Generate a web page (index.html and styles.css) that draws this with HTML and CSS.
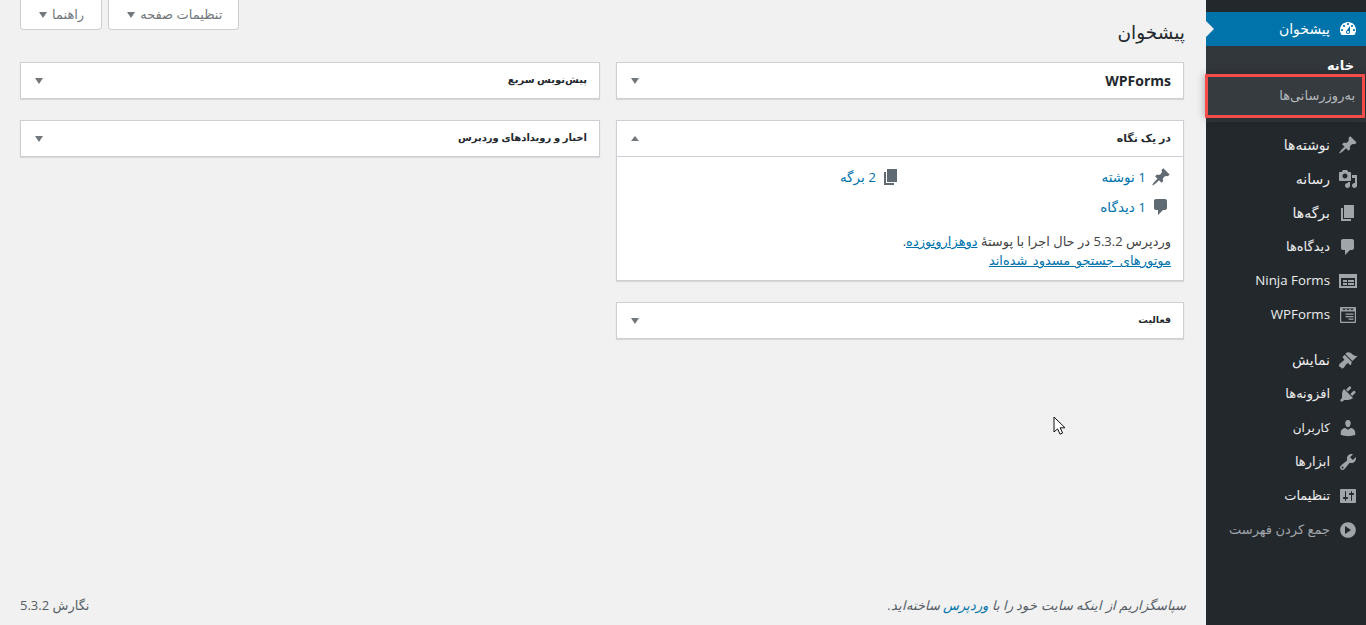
FILE: index.html
```html
<!DOCTYPE html>
<html lang="fa" dir="rtl">
<head>
<meta charset="utf-8">
<title>پیشخوان</title>
<link rel="stylesheet" href="styles.css">
</head>
<body>
<nav class="menu">
  <a class="item current wide" href="#"><svg class="ico" viewBox="0 0 20 20"><path d="M3.76 16h12.48c1.1-1.37 1.76-3.11 1.76-5 0-4.42-3.58-8-8-8s-8 3.58-8 8c0 1.89.66 3.63 1.76 5zM10 4c.55 0 1 .45 1 1s-.45 1-1 1-1-.45-1-1 .45-1 1-1zM6 6c.55 0 1 .45 1 1s-.45 1-1 1-1-.45-1-1 .45-1 1-1zm8 0c.55 0 1 .45 1 1s-.45 1-1 1-1-.45-1-1 .45-1 1-1zm-5.37 5.55L12 7v6c0 1.1-.9 2-2 2s-2-.9-2-2c0-.57.24-1.08.63-1.45zM4 10c.55 0 1 .45 1 1s-.45 1-1 1-1-.45-1-1 .45-1 1-1zm12 0c.55 0 1 .45 1 1s-.45 1-1 1-1-.45-1-1 .45-1 1-1zm-5 3c0-.55-.45-1-1-1s-1 .45-1 1 .45 1 1 1 1-.45 1-1z"/></svg><span>پیشخوان</span></a>
  <div class="sub">
    <a class="sub-home" href="#">خانه</a>
    <a class="sub-update" href="#">به‌روزرسانی‌ها</a>
  </div>
  <a class="item wide" href="#"><svg class="ico" viewBox="0 0 20 20"><path d="M10.44 3.02l1.82-1.82 6.36 6.35-1.83 1.82c-1.05-.68-2.48-.57-3.41.36l-.75.75c-.92.93-1.04 2.35-.35 3.41l-1.83 1.82-2.41-2.41-2.8 2.79c-.42.42-3.38 2.71-3.8 2.29s1.86-3.39 2.28-3.81l2.79-2.79L4.1 9.36l1.83-1.82c1.05.69 2.48.57 3.4-.36l.75-.75c.93-.92 1.05-2.35.36-3.41z"/></svg><span>نوشته‌ها</span></a>
  <a class="item wide" href="#"><svg class="ico" viewBox="0 0 20 20"><path d="M13 11V4c0-.55-.45-1-1-1h-1.67L9 1H5L3.67 3H2c-.55 0-1 .45-1 1v7c0 .55.45 1 1 1h10c.55 0 1-.45 1-1zM7 4.5c1.38 0 2.5 1.12 2.5 2.5S8.38 9.5 7 9.5 4.5 8.38 4.5 7 5.62 4.5 7 4.5zM14 6h5v10.5c0 1.38-1.12 2.5-2.5 2.5S14 17.88 14 16.5s1.12-2.5 2.5-2.5c.17 0 .34.02.5.05V9h-3V6zm-4 8.05V13h2v3.5c0 1.38-1.12 2.5-2.5 2.5S7 17.88 7 16.5 8.12 14 9.5 14c.17 0 .34.02.5.05z"/></svg><span>رسانه</span></a>
  <a class="item wide" href="#"><svg class="ico" viewBox="0 0 20 20"><path d="M6 15V2h10v13H6zm-1 1h8v2H3V5h2v11z"/></svg><span>برگه‌ها</span></a>
  <a class="item" href="#"><svg class="ico" viewBox="0 0 20 20"><path d="M5 2h9c1.1 0 2 .9 2 2v7c0 1.1-.9 2-2 2h-2l-5 5v-5H5c-1.1 0-2-.9-2-2V4c0-1.1.9-2 2-2z"/></svg><span>دیدگاه‌ها</span></a>
  <a class="item" href="#"><svg class="ico" viewBox="0 0 20 20"><path fill-rule="evenodd" d="M1 3h18v14H1zM3 7v8h14V7zM5 9h4v2H5zM10 9h6v2h-6zM5 12h4v2H5zM10 12h6v2h-6z"/></svg><span class="latin">Ninja Forms</span></a>
  <a class="item" href="#"><svg class="ico" viewBox="0 0 20 20"><path fill-rule="evenodd" d="M3 2h14a1 1 0 0 1 1 1v14a1 1 0 0 1-1 1H3a1 1 0 0 1-1-1V3a1 1 0 0 1 1-1zM3.2 6.6V16.8h13.6V6.6zM4 3.4l2 2 2-1.7 2 1.7 2-1.7 2 1.7 2-2zM7.5 8.5h8v1.3h-8zM7.5 11h8v1.3h-8zM10.5 13.5h5v1.3h-5z"/></svg><span class="latin">WPForms</span></a>
  <div class="sep"></div>
  <a class="item wide" href="#"><svg class="ico" viewBox="0 0 20 20"><path d="M14.48 11.06L7.41 3.99l1.5-1.5c.5-.56 2.3-.47 3.51.32 1.21.8 1.43 1.28 2.91 2.1 1.18.64 2.45 1.26 4.45.85zm-.71.71L6.7 4.7 4.93 6.47c-.39.39-.39 1.02 0 1.41l1.06 1.06c.39.39.39 1.03 0 1.42-.6.6-1.43 1.11-2.21 1.69-.35.26-.7.53-1.01.84C1.43 13.23.76 14.77 1.17 16s.86.77 1.19 1.11c.33.33.86.79 1.17 1.04.23.19.47.38.77.38h.01c.3-.05 1-.4 1.48-.87.63-.6 1.41-1.83 1.58-2.07.65-.97 1.25-1.4 1.82-1.99.4-.39 1.04-.39 1.43 0l1.06 1.06c.39.39 1.02.39 1.41 0z"/></svg><span>نمایش</span></a>
  <a class="item" href="#"><svg class="ico" viewBox="0 0 20 20"><path d="M13.11 4.36L9.87 7.6 8 5.73l3.24-3.24c.35-.34 1.05-.2 1.56.32.52.51.66 1.21.31 1.55zm-8 1.77l.91-1.12 9.01 9.01-1.19.84c-.71.71-2.63 1.16-3.82 1.16H6.14L4.9 17.26c-.59.59-1.54.59-2.12 0-.59-.58-.59-1.53 0-2.12l1.24-1.24v-3.88c0-1.13.4-3.19 1.09-3.89zm7.26 3.97l3.24-3.24c.34-.35 1.04-.21 1.55.31.52.51.66 1.21.31 1.55l-3.24 3.25z"/></svg><span>افزونه‌ها</span></a>
  <a class="item narrow" href="#"><svg class="ico" viewBox="0 0 20 20"><path d="M10 9.25c-2.27 0-2.73-3.44-2.73-3.44C7 4.02 7.82 2 9.97 2c2.16 0 2.98 2.02 2.71 3.81 0 0-.41 3.44-2.68 3.44zm0 2.57L12.72 10c2.39 0 4.52 2.33 4.52 4.53v2.49s-3.65 1.13-7.24 1.13c-3.65 0-7.24-1.13-7.24-1.13v-2.49c0-2.25 1.94-4.48 4.47-4.48z"/></svg><span>کاربران</span></a>
  <a class="item" href="#"><svg class="ico" viewBox="0 0 20 20"><path d="M16.68 9.77c-1.34 1.34-3.3 1.67-4.95.99l-5.41 6.52c-.99.99-2.59.99-3.58 0s-.99-2.59 0-3.57l6.52-5.42c-.68-1.65-.35-3.61.99-4.95 1.28-1.28 3.12-1.62 4.72-1.06l-2.89 2.89 2.82 2.82 2.86-2.87c.53 1.58.18 3.39-1.08 4.65zM3.81 16.21c.4.39 1.04.39 1.43 0 .4-.4.4-1.04 0-1.43-.39-.4-1.03-.4-1.43 0-.39.39-.39 1.03 0 1.43z"/></svg><span>ابزارها</span></a>
  <a class="item" href="#"><svg class="ico" viewBox="0 0 20 20"><path d="M18 16V4c0-.55-.45-1-1-1H3c-.55 0-1 .45-1 1v12c0 .55.45 1 1 1h14c.55 0 1-.45 1-1zM8 11h1c.55 0 1 .45 1 1s-.45 1-1 1H8v1.5c0 .28-.22.5-.5.5s-.5-.22-.5-.5V13H6c-.55 0-1-.45-1-1s.45-1 1-1h1V5.5c0-.28.22-.5.5-.5s.5.22.5.5V11zm5-2h-1c-.55 0-1-.45-1-1s.45-1 1-1h1V5.5c0-.28.22-.5.5-.5s.5.22.5.5V7h1c.55 0 1 .45 1 1s-.45 1-1 1h-1v5.5c0 .28-.22.5-.5.5s-.5-.22-.5-.5V9z"/></svg><span>تنظیمات</span></a>
  <a class="item collapse" href="#"><svg class="ico" viewBox="0 0 20 20"><path d="M10 2.16c4.33 0 7.84 3.51 7.84 7.84s-3.51 7.84-7.84 7.84S2.16 14.33 2.16 10 5.71 2.16 10 2.16zM7 14l6-4-6-4v8z"/></svg><span>جمع کردن فهرست</span></a>
</nav>
<main class="content">
  <div class="meta">
    <a class="meta-btn meta-wide" href="#">تنظیمات صفحه<i class="tri"></i></a>
    <a class="meta-btn" href="#">راهنما<i class="tri"></i></a>
  </div>
  <h1 class="title">پیشخوان</h1>
  <div class="cols">
    <div class="col">
      <section class="box">
        <header class="box-head"><h2 class="t-latin">WPForms</h2><i class="tri"></i></header>
      </section>
      <section class="box">
        <header class="box-head open"><h2 class="t-glance">در یک نگاه</h2><i class="tri up"></i></header>
        <div class="box-body">
          <ul class="glance">
            <li><svg class="gi" viewBox="0 0 20 20"><path d="M10.44 3.02l1.82-1.82 6.36 6.35-1.83 1.82c-1.05-.68-2.48-.57-3.41.36l-.75.75c-.92.93-1.04 2.35-.35 3.41l-1.83 1.82-2.41-2.41-2.8 2.79c-.42.42-3.38 2.71-3.8 2.29s1.86-3.39 2.28-3.81l2.79-2.79L4.1 9.36l1.83-1.82c1.05.69 2.48.57 3.4-.36l.75-.75c.93-.92 1.05-2.35.36-3.41z"/></svg><a href="#">1 نوشته</a></li>
            <li><svg class="gi" viewBox="0 0 20 20"><path d="M6 15V2h10v13H6zm-1 1h8v2H3V5h2v11z"/></svg><a href="#">2 برگه</a></li>
            <li><svg class="gi" viewBox="0 0 20 20"><path d="M5 2h9c1.1 0 2 .9 2 2v7c0 1.1-.9 2-2 2h-2l-5 5v-5H5c-1.1 0-2-.9-2-2V4c0-1.1.9-2 2-2z"/></svg><a href="#">1 دیدگاه</a></li>
          </ul>
          <p class="ver">وردپرس 5.3.2 در حال اجرا با پوستهٔ <a href="#">دوهزارونوزده</a>.</p>
          <p class="seo"><a href="#">موتورهای جستجو مسدود شده‌اند</a></p>
        </div>
      </section>
      <section class="box">
        <header class="box-head"><h2 class="t-small">فعالیت</h2><i class="tri"></i></header>
      </section>
    </div>
    <div class="col">
      <section class="box">
        <header class="box-head"><h2>پیش‌نویس سریع</h2><i class="tri"></i></header>
      </section>
      <section class="box">
        <header class="box-head"><h2>اخبار و رویدادهای وردپرس</h2><i class="tri"></i></header>
      </section>
    </div>
  </div>
  <footer class="foot">
    <em class="thanks">سپاسگزاریم از اینکه سایت خود را با <a href="#">وردپرس</a> ساخته‌اید.</em>
    <span>نگارش 5.3.2</span>
  </footer>
  <svg class="cursor" viewBox="0 0 13 20" width="13" height="20"><path d="M1 1v15l3.6-3.2 2.4 5.4 2.6-1.2-2.4-5.2H12z" fill="#fff" stroke="#111" stroke-width="1"/></svg>
</main>
</body>
</html>
```
FILE: styles.css
```css
* { box-sizing: border-box; }
html, body { margin: 0; height: 625px; overflow: hidden; }
body {
  display: flex;
  background: #f1f1f1;
  color: #444;
  font: 13px/19px "Open Sans", "DejaVu Sans", sans-serif;
}
a { text-decoration: none; color: #0073aa; }

.menu {
  flex: 0 0 160px;
  height: 625px;
  background: #23282d;
  padding-top: 12px;
  position: relative;
  z-index: 2;
}
.item {
  display: flex;
  align-items: center;
  height: 34px;
  padding-right: 8px;
  gap: 8px;
  color: #eee;
  font-size: 13px;
  position: relative;
}
.item > span { position: relative; top: -1px; }
.item.wide { font-size: 14px; }
.item.narrow { font-size: 12px; }
.ico { width: 20px; height: 20px; fill: #a0a5aa; flex: none; }
.latin { font-size: 13.3px; }
.current { background: #0073aa; color: #fff; }
.current .ico { fill: #fff; }
.current::after {
  content: "";
  position: absolute;
  left: 0;
  top: 9px;
  border: 8px solid transparent;
  border-left-color: #f1f1f1;
  border-right-width: 0;
}
.sub {
  background: #32373c;
  height: 76px;
  margin-bottom: 6px;
  padding-top: 9px;
  display: flex;
  flex-direction: column;
}
.sub-home {
  color: #fff;
  font-weight: 700;
  font-size: 13px;
  padding-right: 12px;
  line-height: 20px;
}
.sub-update {
  height: 44px;
  margin: -1px 1px 0 -1px;
  border: 3px solid #f44b4b;
  background: #363b40;
  box-shadow: 0 0 8px rgba(0, 0, 0, .35);
  color: #b4b9be;
  font-size: 13px;
  display: flex;
  align-items: center;
  padding: 0 7px 2px 0;
  flex: none;
  position: relative;
}
.sep { height: 11px; }
.collapse { color: #a0a5aa; }

.content {
  flex: 1;
  display: flex;
  flex-direction: column;
  padding: 0 22px 0 20px;
  min-width: 0;
}
.meta {
  display: flex;
  justify-content: flex-end;
  gap: 6px;
  height: 30px;
}
.meta-btn {
  display: flex;
  align-items: center;
  gap: 5px;
  height: 30px;
  padding: 0 17px 0 18px;
  background: #fff;
  border: 1px solid #ccd0d4;
  border-top: 0;
  border-radius: 0 0 4px 4px;
  color: #72777c;
  font-size: 13px;
}
.meta-wide { padding: 0 16px 0 18px; }
.tri {
  display: block;
  width: 0;
  height: 0;
  border: 4px solid transparent;
  border-top: 6px solid #72777c;
  border-bottom: 0;
}
.tri.up { border-top: 0; border-bottom: 5px solid #72777c; }
.title {
  margin: -13px -1px 0 0;
  font-size: 18.5px;
  font-weight: 400;
  line-height: 30px;
  color: #23282d;
  height: 30px;
}
.cols {
  display: grid;
  grid-template-columns: 568px 580px;
  gap: 16px;
  margin-top: 15px;
}
.col { display: flex; flex-direction: column; gap: 21px; }
.box {
  background: #fff;
  border: 1px solid #ccd0d4;
  box-shadow: 0 1px 1px rgba(0, 0, 0, .1);
}
.box-head {
  height: 35px;
  display: flex;
  align-items: center;
  justify-content: space-between;
  padding: 0 12px 0 14px;
}
.box-head.open { border-bottom: 1px solid #ccd0d4; height: 36px; }
.box-head h2 { margin: -2px 0 0; font-size: 10px; font-weight: 700; color: #23282d; }
.box-head .t-latin { font-size: 14px; margin-top: 0; }
.box-head .t-glance { font-size: 11px; margin-top: -3px; }
.box-head .t-small { font-size: 9.5px; }
.box-body { padding: 10px 12px 0; height: 123px; }
.glance {
  list-style: none;
  margin: 0;
  padding: 0;
  display: grid;
  grid-template-columns: 270px 1fr;
  row-gap: 10px;
  font-size: 13.5px;
}
.glance li { display: flex; align-items: center; gap: 5px; height: 20px; }
.gi { width: 20px; height: 20px; fill: #606a73; flex: none; }
.ver { margin: 15px 0 0; line-height: 18px; }
.seo { margin: 1px 0 0; line-height: 18px; word-spacing: 2px; }
.ver a, .seo a { text-decoration: underline; }
.foot {
  margin-top: auto;
  height: 29px;
  display: flex;
  justify-content: space-between;
  color: #555d66;
}
.thanks { margin-right: -2px; }
.cursor { position: absolute; left: 1053px; top: 416px; }
```
